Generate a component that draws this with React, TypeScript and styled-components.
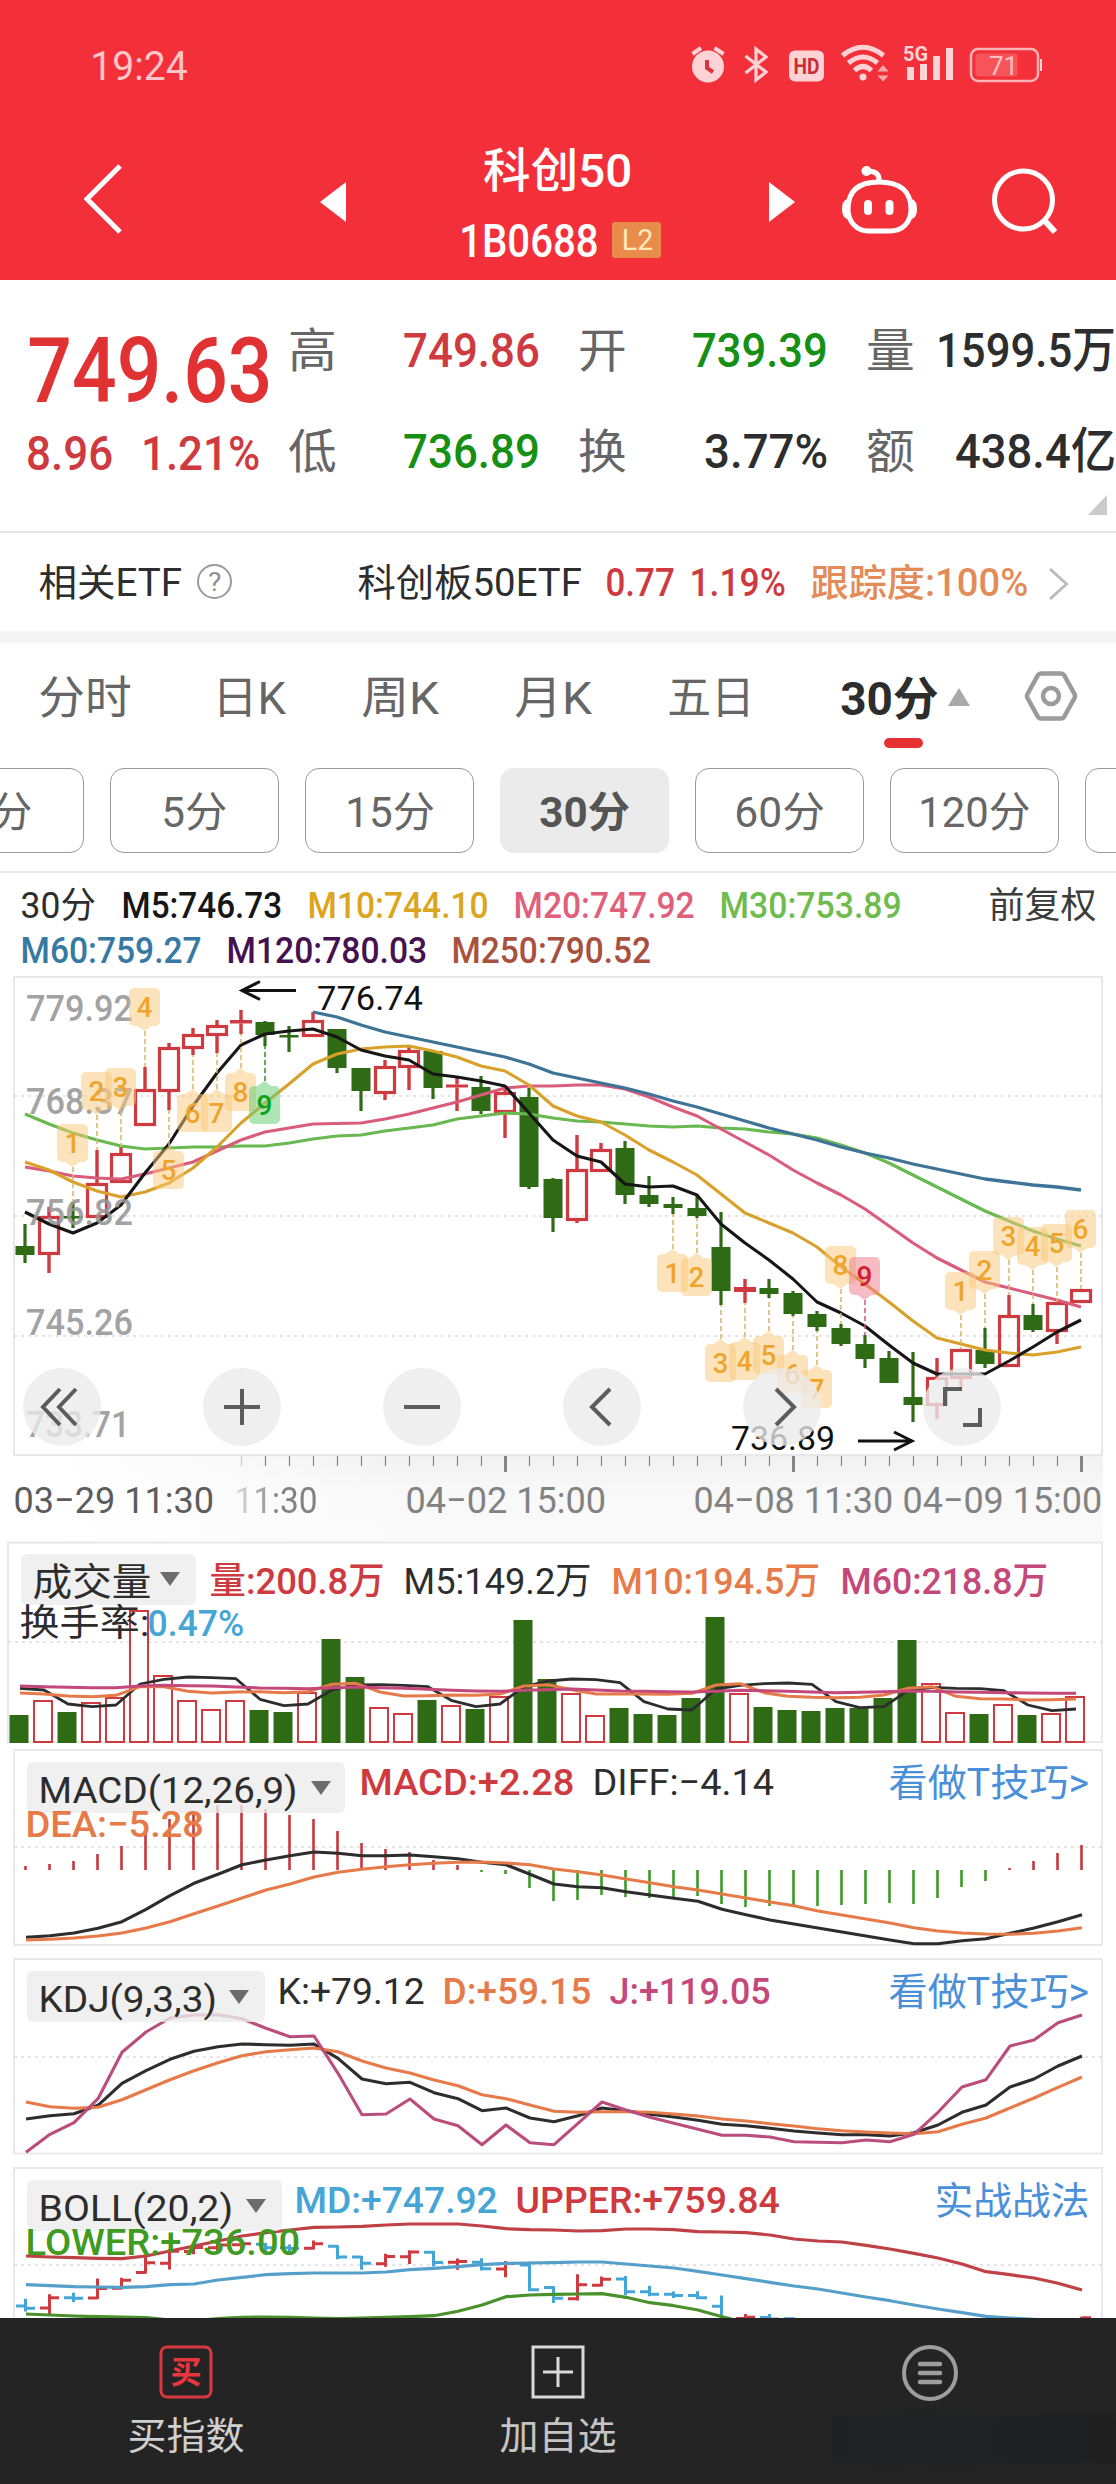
import React, { useLayoutEffect, useRef, useState } from "react";
import styled, { createGlobalStyle } from "styled-components";

const FONT = `Roboto, "Noto Sans CJK SC", sans-serif`;
const RED = "#cf3a40";
const GREEN = "#2f6a14";
const INK = "#2d2d2d";
const ORANGE = "#e67a48";
const MAGENTA = "#c4487a";
const SKY = "#45a5d5";

const Global = createGlobalStyle`
  body { margin: 0; background: #fff; font-family: ${FONT}; }
  * { box-sizing: border-box; }
  svg { display: block; }
  svg text { font-family: ${FONT}; }
`;

/* ---------- text fitted to a column width ---------- */

const FitBox = styled.span<{ $w: number; $s: number; $c: string; $b: number; $ml: number }>`
  display: inline-block;
  flex: none;
  width: ${(p) => p.$w}px;
  margin-left: ${(p) => p.$ml}px;
  font-size: ${(p) => p.$s}px;
  line-height: 1;
  color: ${(p) => p.$c};
  font-weight: ${(p) => p.$b};
  white-space: pre;
`;
const FitInner = styled.span`
  display: inline-block;
  transform-origin: 0 50%;
`;

type FitProps = { w: number; s: number; c?: string; b?: number; ml?: number; children: string };
function Fit({ w, s, c = INK, b = 400, ml = 0, children }: FitProps) {
  const ref = useRef<HTMLSpanElement>(null);
  const [k, setK] = useState(1);
  const pad = s * 0.04;
  useLayoutEffect(() => {
    if (ref.current) setK((w + pad * 2) / ref.current.offsetWidth);
  }, [w, pad, children]);
  return (
    <FitBox $w={w} $s={s} $c={c} $b={b} $ml={ml}>
      <FitInner ref={ref} style={{ transform: `translateX(${-pad}px) scaleX(${k})` }}>
        {children}
      </FitInner>
    </FitBox>
  );
}

/* ---------- page parts ---------- */

const Page = styled.main`
  width: 1116px;
  height: 2484px;
  overflow: hidden;
  display: flex;
  flex-direction: column;
  background: #fff;
`;
const Header = styled.header`
  height: 280px;
  flex: none;
  background: #f33039;
  color: #fff;
`;
const StatusBar = styled.div`
  height: 130px;
  padding: 40px 74px 0 92px;
  display: flex;
  justify-content: space-between;
`;
const Clock = styled.div`
  padding-top: 6px;
`;
const NavRow = styled.div`
  height: 150px;
  padding-left: 84px;
  display: flex;
`;
const NavIcon = styled.div<{ $ml?: number; $mt: number }>`
  margin-left: ${(p) => p.$ml ?? 0}px;
  margin-top: ${(p) => p.$mt}px;
  flex: none;
`;
const TitleBlock = styled.div`
  width: 423px;
  padding-top: 17px;
  display: flex;
  flex-direction: column;
  align-items: center;
  gap: 24px;
`;
const CodeLine = styled.div`
  display: flex;
  align-items: flex-start;
  padding-left: 6px;
`;
const LevelBadge = styled.div`
  width: 49px;
  height: 36px;
  margin: 4px 0 0 15px;
  padding: 3px 0 0 11px;
  border-radius: 3px;
  background: #e98c4b;
`;

const Quote = styled.section`
  position: relative;
  height: 253px;
  flex: none;
  display: flex;
  border-bottom: 2px solid #e4e4e4;
`;
const PriceCol = styled.div`
  width: 290px;
  padding: 46px 0 0 31px;
`;
const ChangeLine = styled.div`
  display: flex;
  margin: 12px 0 0 -3px;
`;
const Metrics = styled.div`
  display: grid;
  grid-template-columns: 248px 246px 246px;
  column-gap: 42px;
  grid-auto-rows: 101px;
  padding-top: 46px;
`;
const Metric = styled.div`
  display: flex;
  justify-content: space-between;
  align-items: baseline;
  height: 50px;
`;
const ExpandCorner = styled.i`
  position: absolute;
  right: 9px;
  bottom: 16px;
  border-left: 19px solid transparent;
  border-bottom: 20px solid #cbcbcb;
`;
const EtfRow = styled.section`
  height: 98px;
  flex: none;
  padding: 31px 0 0 40px;
  display: flex;
`;
const HelpMark = styled.div`
  width: 35px;
  height: 35px;
  margin: 0 0 0 16px;
  border: 2px solid #9a9a9a;
  border-radius: 50%;
  display: flex;
  justify-content: center;
  padding-top: 3px;
`;
const Band = styled.div`
  height: 12px;
  flex: none;
  background: #f4f4f4;
`;
const Tabs = styled.nav`
  height: 125px;
  flex: none;
  padding: 33px 0 0 40px;
  display: flex;
`;
const ActiveTab = styled.div`
  position: relative;
  display: flex;
  margin-left: 89px;
  width: 129px;
  &::after {
    content: "";
    position: absolute;
    left: 42px;
    top: 62px;
    width: 39px;
    height: 10px;
    border-radius: 5px;
    background: #e63133;
  }
`;
const UpArrow = styled.i`
  width: 0;
  height: 0;
  margin: 12px 0 0 11px;
  border: 11.5px solid transparent;
  border-top: 0;
  border-bottom: 18px solid #a9a9a9;
`;
const GearWrap = styled.div`
  margin: -6px 0 0 53px;
`;
const Pills = styled.div`
  height: 105px;
  flex: none;
  display: flex;
  gap: 26px;
  margin-left: -85px;
  border-bottom: 2px solid #e7e7e7;
`;
const Pill = styled.div<{ $on?: boolean }>`
  width: 169px;
  height: 85px;
  flex: none;
  border-radius: 14px;
  border: ${(p) => (p.$on ? "0" : "1.5px solid #999")};
  background: ${(p) => (p.$on ? "#ebebeb" : "#fff")};
  display: flex;
  align-items: center;
  justify-content: center;
  padding-top: 5px;
`;
const Averages = styled.div`
  height: 103px;
  flex: none;
  padding: 15px 0 0 22px;
`;
const AvgLine = styled.div`
  display: flex;
  height: 45px;
`;

const ChartBox = styled.section<{ $h: number }>`
  position: relative;
  height: ${(p) => p.$h}px;
  flex: none;
  overflow: hidden;
`;
const Plot = styled.svg`
  position: absolute;
  left: 0;
  top: 0;
  width: 1116px;
  height: 100%;
`;
const Controls = styled.div`
  position: absolute;
  left: 23px;
  bottom: 10px;
  display: flex;
  gap: 102px;
`;
const Round = styled.button`
  width: 78px;
  height: 78px;
  padding: 0;
  border: 0;
  border-radius: 50%;
  background: rgba(234, 234, 234, 0.78);
  display: flex;
  align-items: center;
  justify-content: center;
`;
const Axis = styled.div`
  height: 85px;
  flex: none;
  width: 1103px;
  background: linear-gradient(90deg, #fff 60px, rgba(255, 255, 255, 0) 420px), linear-gradient(#f1f1f1, #f8f8f8 35px, #fafafa);
`;
const AxisDates = styled.div`
  display: flex;
  padding: 8px 0 0 15px;
`;
const Fading = styled.div`
  display: flex;
  margin-left: 23px;
  -webkit-mask-image: linear-gradient(90deg, rgba(0, 0, 0, 0.25), #000 55%);
  mask-image: linear-gradient(90deg, rgba(0, 0, 0, 0.25), #000 55%);
`;
const Legend = styled.div<{ $x: number; $top: number }>`
  position: relative;
  display: flex;
  padding: ${(p) => p.$top}px 28px 0 ${(p) => p.$x}px;
`;
const Chip = styled.div<{ $w: number; $pt: number; $pl: number }>`
  flex: none;
  width: ${(p) => p.$w}px;
  height: 51px;
  border-radius: 6px;
  background: rgba(236, 236, 236, 0.8);
  display: flex;
  padding: ${(p) => p.$pt}px 0 0 ${(p) => p.$pl}px;
`;
const DownArrow = styled.i<{ $ml: number }>`
  width: 0;
  height: 0;
  margin: 9px 0 0 ${(p) => p.$ml}px;
  border: 10px solid transparent;
  border-bottom: 0;
  border-top: 14px solid #6c6c6c;
`;
const Values = styled.div<{ $mt: number }>`
  flex: 1;
  display: flex;
  margin-top: ${(p) => p.$mt}px;
`;
const Push = styled.span`
  margin-left: auto;
  display: flex;
`;
const LegendTail = styled.div<{ $x: number; $mt: number }>`
  position: relative;
  display: flex;
  padding-left: ${(p) => p.$x}px;
  margin-top: ${(p) => p.$mt}px;
`;

const BottomBar = styled.nav`
  height: 166px;
  flex: none;
  background: #242424;
  display: grid;
  grid-template-columns: repeat(3, 372px);
`;
const BarItem = styled.div`
  display: flex;
  flex-direction: column;
  align-items: center;
  padding-top: 27px;
  gap: 18px;
`;
const Smudge = styled.div`
  width: 286px;
  height: 50px;
  margin-top: -5px;
  margin-left: 86px;
  background: linear-gradient(90deg, #202122, #212425 30%, #1f2123 70%, #1f1f1f);
  filter: blur(2px);
`;

/* ---------- data ---------- */

const X0 = 25;
const STEP = 24;
const cx = (i: number) => X0 + STEP * i;

// [up, body top, body bottom, wick top, wick bottom]
type Candle = [number, number, number, number, number];
const candles: Candle[] = [
  [0, 1246, 1255, 1224, 1263], [1, 1216, 1254, 1207, 1273], [0, 1216, 1218.5, 1202, 1228], [1, 1183, 1217, 1150, 1217],
  [1, 1153, 1182, 1147, 1183], [1, 1089, 1125, 1067, 1125], [1, 1047, 1091, 1043, 1110], [1, 1034, 1048, 1028, 1055],
  [1, 1025, 1035, 1020, 1053], [1, 1020, 1023.5, 1010, 1034], [0, 1022, 1035, 1021, 1046], [0, 1035, 1037.5, 1026, 1052],
  [1, 1020, 1036, 1012, 1037], [0, 1029, 1068, 1029, 1073], [0, 1068, 1091, 1068, 1111], [1, 1066, 1093, 1060, 1100],
  [1, 1050, 1067, 1047, 1090], [0, 1051, 1088, 1050, 1099], [1, 1084.5, 1087.5, 1077, 1111], [0, 1087, 1111, 1076, 1114],
  [1, 1092, 1112, 1086, 1138], [0, 1097, 1187, 1088, 1189], [0, 1179, 1218, 1178, 1232], [1, 1169, 1220, 1135, 1223],
  [1, 1149, 1171, 1143, 1172], [0, 1148, 1195, 1141, 1204], [0, 1195, 1204, 1176, 1207], [0, 1204, 1208, 1197, 1214],
  [0, 1208, 1216, 1196, 1218], [0, 1247, 1291, 1212, 1305], [1, 1287, 1292, 1279, 1303], [0, 1288, 1294, 1279, 1298],
  [0, 1293, 1314, 1291, 1316], [0, 1314, 1327, 1311, 1331], [0, 1328, 1344, 1324, 1346], [0, 1344, 1359, 1335, 1368],
  [0, 1358, 1383, 1351, 1383], [0, 1397, 1405, 1352, 1422], [1, 1377, 1405, 1358, 1419], [1, 1349, 1378, 1349, 1387],
  [0, 1350, 1364, 1328, 1368], [1, 1315, 1366, 1295, 1366], [0, 1315, 1330, 1304, 1332], [1, 1302, 1331, 1302, 1344],
  [1, 1289, 1302, 1289, 1303],
];

const ma5 = [1212, 1224, 1233, 1223, 1205, 1173, 1144, 1106, 1073, 1045, 1034, 1031, 1029, 1037, 1050, 1056, 1060, 1074, 1077, 1081, 1086, 1113, 1140, 1156, 1162, 1184, 1187, 1186, 1195, 1224, 1243, 1260, 1279, 1302, 1313, 1326, 1345, 1363, 1374, 1374, 1374, 1361, 1347, 1332, 1320];
const ma10 = [1162, 1170, 1182, 1191, 1197, 1192, 1183, 1168, 1147, 1123, 1103, 1084, 1064, 1054, 1049, 1047, 1046, 1051, 1057, 1066, 1071, 1085, 1106, 1116, 1122, 1135, 1150, 1162, 1175, 1194, 1213, 1223, 1233, 1247, 1267, 1284, 1302, 1321, 1338, 1344, 1350, 1353, 1355, 1352, 1347];
const ma20 = [1167, 1171, 1176, 1178, 1179, 1174, 1168, 1162, 1151, 1140, 1132, 1128, 1124, 1123.5, 1123, 1119, 1114, 1108, 1102, 1095, 1088, 1086, 1086, 1085, 1085, 1089, 1097, 1107, 1116, 1129, 1142, 1155, 1170, 1183, 1195, 1209, 1226, 1243, 1258, 1270, 1282, 1288, 1294, 1300, 1307];
const ma30 = [1114, 1124, 1133, 1140, 1146, 1149, 1148, 1147, 1147, 1146, 1146, 1143, 1139, 1136, 1135, 1131, 1128, 1125, 1119, 1116, 1113, 1114, 1118, 1121, 1122, 1124, 1126, 1127, 1126, 1128, 1129, 1132, 1134, 1138, 1145, 1153, 1163, 1175, 1187, 1199, 1211, 1221, 1231, 1239, 1246];
const ma60 = [1012, 1017, 1025, 1032, 1037, 1042, 1047, 1052, 1057, 1064, 1073, 1078, 1083, 1088, 1094, 1101, 1107, 1114, 1121, 1128, 1134, 1140, 1147, 1153, 1158, 1164, 1169, 1174, 1179, 1182, 1185, 1187, 1190];

// [candle index, label, box top, tip direction, colour, leader end]
type Mark = [number, string, number, 1 | -1, "y" | "g" | "r", number];
const marks: Mark[] = [
  [2, "1", 1124, 1, "y", 1202], [3, "2", 1072, 1, "y", 1150], [4, "3", 1068, 1, "y", 1147], [5, "4", 988, 1, "y", 1067],
  [6, "5", 1151, -1, "y", 1110], [7, "6", 1094, -1, "y", 1055], [8, "7", 1094, -1, "y", 1053], [9, "8", 1073, -1, "y", 1034],
  [10, "9", 1086, -1, "g", 1046], [27, "1", 1254, -1, "y", 1214], [28, "2", 1258, -1, "y", 1218], [29, "3", 1344, -1, "y", 1305],
  [30, "4", 1342, -1, "y", 1303], [31, "5", 1336, -1, "y", 1298], [32, "6", 1355, -1, "y", 1316], [33, "7", 1370, -1, "y", 1331],
  [34, "8", 1246, 1, "y", 1324], [35, "9", 1257, 1, "r", 1335], [39, "1", 1272, 1, "y", 1349], [40, "2", 1251, 1, "y", 1328],
  [41, "3", 1217, 1, "y", 1295], [42, "4", 1227, 1, "y", 1304], [43, "5", 1224, 1, "y", 1302], [44, "6", 1210, 1, "y", 1289],
];
const markTone = {
  y: { fill: "rgba(252,200,120,.5)", text: "#efa52c", line: "#d9b566" },
  g: { fill: "rgba(110,205,120,.55)", text: "#0aa11c", line: "#2f8a3a" },
  r: { fill: "rgba(240,120,135,.5)", text: "#d3202c", line: "#cf5480" },
};

const volRed = new Set([1, 3, 4, 5, 6, 7, 8, 9, 12, 15, 16, 18, 20, 23, 24, 30, 38, 39, 41, 43, 44]);
const volTop = [1715, 1700, 1712, 1702, 1697, 1610, 1675, 1700, 1709, 1700, 1710, 1712, 1692, 1639, 1677, 1707, 1713, 1700, 1705, 1709, 1696, 1620, 1679, 1693, 1715, 1708, 1714, 1715, 1698, 1617, 1693, 1707, 1710, 1711, 1708, 1708, 1698, 1640, 1683, 1712, 1714, 1704, 1715, 1713, 1696];
const vol5 = [475, 480, 522, 530, 525, 462, 448, 441, 443, 446, 508, 527, 522, 480, 465, 464, 466, 470, 512, 530, 522, 470, 453, 447, 449, 458, 515, 537, 540, 477, 466, 461, 459, 463, 515, 533, 530, 482, 472, 475, 476, 482, 525, 542, 537];
const vol10 = [489, 492, 498, 500, 496, 470, 470, 484, 489, 486, 485, 488, 485, 463, 460, 486, 498, 497, 495, 496, 492, 468, 464, 479, 492, 492, 492, 493, 490, 465, 461, 488, 499, 502, 503, 502, 495, 475, 470, 499, 506, 507, 510, 509, 507];
const vol60 = [468, 470, 472, 473, 473, 468, 466, 467, 468, 471, 474, 475, 476, 473, 471, 473, 475, 478, 481, 483, 484, 481, 479, 477, 480, 483, 484, 485, 486, 484, 481, 482, 484, 486, 488, 487, 485, 483, 484, 486, 487, 488, 489, 490, 490];

const macd = [1866, 1864, 1861, 1854, 1846, 1832, 1819, 1812, 1805, 1805, 1809, 1815, 1819, 1831, 1843, 1849, 1852, 1860, 1865, 1872, 1874, 1888, 1901, 1900, 1895, 1897, 1898, 1897, 1896, 1904, 1907, 1906, 1905, 1906, 1905, 1904, 1903, 1904, 1898, 1887, 1881, 1868, 1861, 1853, 1845];
const diff = [592, 587, 579, 565, 545, 508, 467, 430, 403, 374, 360, 347, 336, 340, 347, 347, 345, 350, 356, 367, 374, 403, 432, 440, 443, 455, 465, 475, 484, 508, 524, 540, 552, 564, 576, 588, 600, 611, 611, 602, 596, 580, 564, 545, 524];
const dea = [600, 598, 594, 588, 579, 564, 545, 521, 498, 474, 450, 432, 411, 397, 388, 380, 374, 370, 367, 366, 369, 374, 387, 395, 405, 417, 428, 440, 450, 462, 474, 486, 497, 513, 525, 537, 549, 563, 573, 579, 582, 583, 580, 573, 563];

const kLine = [507, 497, 491, 466, 400, 362, 328, 304, 290, 282, 284, 286, 282, 325, 387, 401, 397, 428, 446, 482, 474, 504, 515, 497, 474, 482, 493, 501, 511, 523, 527, 535, 543, 549, 554, 554, 558, 548, 525, 487, 465, 411, 387, 348, 318];
const dLine = [456, 470, 475, 472, 449, 419, 389, 362, 338, 317, 305, 299, 294, 305, 333, 354, 369, 390, 407, 434, 446, 465, 484, 487, 485, 485, 487, 492, 498, 507, 513, 521, 528, 536, 542, 546, 549, 551, 545, 523, 504, 474, 444, 412, 381];
const jLine = [607, 553, 518, 446, 307, 246, 204, 195, 194, 206, 235, 260, 258, 370, 494, 492, 447, 507, 527, 584, 525, 578, 584, 520, 456, 480, 502, 520, 538, 556, 556, 561, 575, 577, 578, 570, 575, 553, 487, 411, 389, 288, 270, 218, 195];

const upper = [318, 321, 323, 325, 326, 318, 303, 288, 273, 258, 248, 240, 232, 231, 229, 225, 222, 222, 222, 228, 236, 239, 240, 243, 242, 237, 237, 239, 245, 246, 248, 255, 267, 273, 276, 286, 297, 310, 324, 342, 365, 374, 384, 400, 420];
const mid = [404, 407, 410, 411, 412, 410, 404, 402, 390, 382, 374, 371, 369, 369, 369, 366, 359, 355, 350, 344, 340, 339, 338, 336, 336, 342, 348, 354, 364, 375, 386, 397, 408, 417, 429, 441, 452, 465, 477, 488, 499, 504, 508, 512, 516];
const lower = [492, 495, 498, 500, 501, 503, 510, 512, 506, 502, 501, 502, 504, 506, 504, 502, 500, 497, 484, 465, 440, 435, 433, 432, 431, 442, 458, 467, 480, 500, 520];

/* ---------- drawing helpers ---------- */

function Curve({ ys, color, x0 = X0, from = 0, base, w = 3.1 }: { ys: number[]; color: string; x0?: number; from?: number; base?: number; w?: number }) {
  const pts = ys.map((y, i) => `${x0 + STEP * (i + from)},${base === undefined ? y : (base + y / 3).toFixed(1)}`).join(" ");
  return <polyline points={pts} fill="none" stroke={color} strokeWidth={w} strokeLinejoin="round" />;
}
const Dotted = ({ y, x = 14 }: { y: number; x?: number }) => (
  <line x1={x} x2="1102" y1={y} y2={y} stroke="#dcdcdc" strokeWidth="1.5" strokeDasharray="3 4" />
);
const Frame = ({ x = 14, y, h }: { x?: number; y: number; h: number }) => (
  <rect x={x} y={y} width={1102 - x} height={h} fill="none" stroke="#e8e8e8" strokeWidth="2" />
);

function MainChart() {
  return (
    <ChartBox $h={480}>
      <Plot viewBox="0 976 1116 480">
        <Frame y={977} h={478} />
        {[1096, 1216, 1336].map((y) => <Dotted key={y} y={y} />)}
        {candles.map(([up, t, b, wt, wb], i) =>
          up ? (
            <g key={i} stroke={RED} fill="none">
              <path d={`M${cx(i)} ${wt}V${t}M${cx(i)} ${b}V${wb}`} strokeWidth="3.4" />
              {b - t < 6 ? <rect x={cx(i) - 11} y={t} width="22" height={b - t} fill={RED} stroke="none" /> : <rect x={cx(i) - 9.5} y={t + 1.5} width="19" height={b - t - 2} strokeWidth="3.2" />}
            </g>
          ) : (
            <g key={i}>
              <line x1={cx(i)} x2={cx(i)} y1={wt} y2={wb} stroke={GREEN} strokeWidth="3.2" />
              <rect x={cx(i) - 9.5} y={t} width="19" height={b - t} fill={GREEN} />
            </g>
          )
        )}
        <Curve ys={ma30} color="#6ab850" />
        <Curve ys={ma20} color="#d95c7c" />
        <Curve ys={ma10} color="#d9a12a" />
        <Curve ys={ma5} color="#161616" />
        <Curve ys={ma60} color="#3c7396" from={12} w={3.3} />
        {([["779.92", 1021], ["768.37", 1114], ["756.82", 1225], ["745.26", 1335], ["733.71", 1437]] as [string, number][]).map(([t, y]) => (
          <text key={t} x="26" y={y} fontSize="37" fontWeight="500" fill="#969696" fillOpacity=".9" textLength={t === "733.71" ? 104 : 107} lengthAdjust="spacingAndGlyphs">{t}</text>
        ))}
        {marks.map(([i, t, top, dir, tone, end], n) => {
          const x = cx(i) - 0.5;
          const m = markTone[tone];
          const bottom = top + 38;
          const tip = dir > 0 ? bottom + 5 : top - 5;
          const edge = dir > 0 ? bottom : top;
          return (
            <g key={n}>
              <line x1={x + 0.5} x2={x + 0.5} y1={tip} y2={end} stroke={m.line} strokeWidth="1.5" strokeDasharray="5 3" />
              <rect x={x - 15.5} y={top} width="31" height="38" rx="5" fill={m.fill} />
              <path d={`M${x - 7} ${edge}L${x} ${tip}L${x + 7} ${edge}Z`} fill={m.fill} />
              <text x={x} y={top + 29} textAnchor="middle" fontSize="28" fontWeight="500" fill={m.text}>{t}</text>
            </g>
          );
        })}
        <path d="M296 990.5H242M260 981.5L242 990.5L260 999.5" fill="none" stroke="#111" strokeWidth="3" />
        <text x="317" y="1010" fontSize="32.5" fill="#111" textLength="106" lengthAdjust="spacingAndGlyphs">776.74</text>
        <path d="M858 1441H912M894 1432L912 1441L894 1450" fill="none" stroke="#111" strokeWidth="3" />
        <text x="731" y="1450" fontSize="32.5" fill="#111" textLength="104" lengthAdjust="spacingAndGlyphs">736.89</text>
      </Plot>
      <Controls>
        {["M37 20L20 38L37 56M53 20L36 38L53 56", "M39 20V56M21 38H57", "M21 38H57", "M47 20L29 38L47 56", "M33 20L51 38L33 56", "M39 20H22V37M40 56H57V39"].map((d) => (
          <Round key={d}>
            <svg width="78" height="78" viewBox="0 -1 78 78"><path d={d} fill="none" stroke="#5c5c5c" strokeWidth="4" /></svg>
          </Round>
        ))}
      </Controls>
    </ChartBox>
  );
}

function TimeAxis() {
  return (
    <Axis>
      <svg width="1103" height="18" viewBox="0 0 1103 18">
        {Array.from({ length: 36 }, (_, n) => {
          const i = n + 9;
          const big = i === 20 || i === 32 || i === 44;
          return <line key={i} x1={cx(i) + 0.5} x2={cx(i) + 0.5} y1="0" y2={big ? 16 : 10} stroke={n ? "#858585" : "#ccc"} strokeWidth={big ? 3 : 1.2} />;
        })}
      </svg>
      <AxisDates>
        <Fit w={198} s={37} c="#5c5c5c">03−29 11:30</Fit>
        <Fading><Fit w={80} s={37} c="#828282">11:30</Fit></Fading>
        <Fit w={198} s={37} c="#828282" ml={91}>04−02 15:00</Fit>
        <Fit w={197} s={37} c="#828282" ml={90}>04−08 11:30</Fit>
        <Fit w={197} s={37} c="#828282" ml={12}>04−09 15:00</Fit>
      </AxisDates>
    </Axis>
  );
}

function Volume() {
  return (
    <ChartBox $h={208}>
      <Plot viewBox="0 1541 1116 208">
        <Frame x={8} y={1542.5} h={199.5} />
        <Dotted y={1642} x={8} />
        {volTop.map((t, i) => {
          const x = 19 + STEP * i;
          return volRed.has(i) ? (
            <rect key={i} x={x - 9} y={t + 1} width="18" height={1741 - t} fill="#fff" stroke={RED} strokeWidth="2" />
          ) : (
            <rect key={i} x={x - 9.5} y={t} width="19" height={1743 - t} fill={GREEN} />
          );
        })}
        <Curve ys={vol5} color={INK} x0={20} base={1530} w={2.8} />
        <Curve ys={vol10} color={ORANGE} x0={20} base={1530} w={3} />
        <Curve ys={vol60} color={MAGENTA} x0={20} base={1530} w={3} />
      </Plot>
      <Legend $x={21} $top={13}>
        <Chip $w={175} $pt={9} $pl={13}>
          <Fit w={116} s={38}>成交量</Fit>
          <DownArrow $ml={10} />
        </Chip>
        <Values $mt={9}>
          <Fit w={172} s={37} c={RED} b={500} ml={15}>量:200.8万</Fit>
          <Fit w={185} s={37} ml={22}>M5:149.2万</Fit>
          <Fit w={206} s={37} c={ORANGE} b={500} ml={23}>M10:194.5万</Fit>
          <Fit w={205} s={37} c={MAGENTA} b={500} ml={23}>M60:218.8万</Fit>
        </Values>
      </Legend>
      <LegendTail $x={21} $mt={0}>
        <Fit w={127} s={37}>换手率:</Fit>
        <Fit w={94} s={37} c={SKY} b={500} ml={1}>0.47%</Fit>
      </LegendTail>
    </ChartBox>
  );
}

function Macd() {
  return (
    <ChartBox $h={208}>
      <Plot viewBox="0 1749 1116 208">
        <Frame y={1750} h={195} />
        <Dotted y={1847} />
        {macd.map((y, i) => (
          <line key={i} x1={cx(i) + 0.5} x2={cx(i) + 0.5} y1={1870} y2={y} stroke={y < 1870 ? "#c4393f" : "#3a9b25"} strokeWidth="2.6" />
        ))}
        <Curve ys={diff} color={INK} x0={26} base={1740} />
        <Curve ys={dea} color={ORANGE} x0={26} base={1740} />
      </Plot>
      <Legend $x={27} $top={13}>
        <Chip $w={318} $pt={10} $pl={13}>
          <Fit w={256} s={37}>MACD(12,26,9)</Fit>
          <DownArrow $ml={15} />
        </Chip>
        <Values $mt={2}>
          <Fit w={212} s={37} c={RED} b={500} ml={16}>MACD:+2.28</Fit>
          <Fit w={179} s={37} ml={21}>DIFF:−4.14</Fit>
          <Push><Fit w={198} s={38} c="#4a90d9">{"看做T技巧>"}</Fit></Push>
        </Values>
      </Legend>
      <LegendTail $x={27} $mt={-7}>
        <Fit w={176} s={37} c={ORANGE} b={500}>DEA:−5.28</Fit>
      </LegendTail>
    </ChartBox>
  );
}

function Kdj() {
  return (
    <ChartBox $h={209}>
      <Plot viewBox="0 1957 1116 209">
        <Frame y={1959} h={194.5} />
        <Dotted y={2057} />
        <Curve ys={kLine} color={INK} x0={26} base={1950} />
        <Curve ys={dLine} color={ORANGE} x0={26} base={1950} />
        <Curve ys={jLine} color="#bb4d7c" x0={26} base={1950} />
      </Plot>
      <Legend $x={27} $top={14}>
        <Chip $w={238} $pt={10} $pl={13}>
          <Fit w={175} s={37}>KDJ(9,3,3)</Fit>
          <DownArrow $ml={14} />
        </Chip>
        <Values $mt={2}>
          <Fit w={144} s={37} ml={14}>K:+79.12</Fit>
          <Fit w={146} s={37} c={ORANGE} b={500} ml={21}>D:+59.15</Fit>
          <Fit w={158} s={37} c={MAGENTA} b={500} ml={21}>J:+119.05</Fit>
          <Push><Fit w={198} s={38} c="#4a90d9">{"看做T技巧>"}</Fit></Push>
        </Values>
      </Legend>
    </ChartBox>
  );
}

function Boll() {
  const my = (y: number) => 2244 + (y - 1021) * 0.275;
  return (
    <ChartBox $h={152}>
      <Plot viewBox="0 2166 1116 152">
        <Frame y={2168} h={200} />
        <Dotted y={2265} />
        {candles.map(([up, t, b, wt, wb], i) => {
          const o = my(up ? b : t);
          const c = my(up ? t : b);
          return (
            <path
              key={i}
              d={`M${cx(i) - 9} ${o}H${cx(i) + 0.5}M${cx(i) + 0.5} ${c}H${cx(i) + 10}M${cx(i) + 0.5} ${my(wt) - 1}V${my(wb) + 1}`}
              fill="none"
              stroke={up ? RED : SKY}
              strokeWidth="3"
            />
          );
        })}
        <Curve ys={upper} color="#bf4045" x0={26} base={2150} w={3.2} />
        <Curve ys={mid} color="#55a0cb" x0={26} base={2150} w={3.2} />
        <Curve ys={lower} color="#4a912c" x0={26} base={2150} w={3.2} />
      </Plot>
      <Legend $x={27} $top={14}>
        <Chip $w={255} $pt={10} $pl={13}>
          <Fit w={192} s={37}>BOLL(20,2)</Fit>
          <DownArrow $ml={14} />
        </Chip>
        <Values $mt={2}>
          <Fit w={200} s={37} c={SKY} b={500} ml={14}>MD:+747.92</Fit>
          <Fit w={261} s={37} c={RED} b={500} ml={21}>UPPER:+759.84</Fit>
          <Push><Fit w={152} s={38} c="#4a90d9">实战战法</Fit></Push>
        </Values>
      </Legend>
      <LegendTail $x={27} $mt={-7}>
        <Fit w={272} s={37} c="#3f9b22" b={500}>LOWER:+736.00</Fit>
      </LegendTail>
    </ChartBox>
  );
}

function StatusIcons() {
  const P = "#ffd3d5";
  return (
    <svg width="360" height="50" viewBox="682 40 360 50">
      <g fill={P}>
        <circle cx="708" cy="66.500" r="16" />
        <path d="M692.500 54L701 48M714.500 48L723.500 54" stroke={P} strokeWidth="4" />
        <path d="M707 60V68L713 72" fill="none" stroke="#d8343c" strokeWidth="4" />
        <path d="M745.500 56L766 72L756 80V49L766 57L745.500 73" fill="none" stroke={P} strokeWidth="3.200" />
        <rect x="789" y="50.500" width="35" height="31" rx="6" />
        <text x="806.500" y="74" fontSize="22" fontWeight="700" fill="#c92e36" textAnchor="middle" textLength="26" lengthAdjust="spacingAndGlyphs">HD</text>
        <g fill="none" stroke={P} strokeWidth="5">
          <path d="M842.500 55.500Q863 39 883.500 55.500" />
          <path d="M848.500 63Q863 51 877.500 63" />
          <path d="M854.500 70.500Q863 62.500 871.500 70.500" />
        </g>
        <circle cx="863" cy="77" r="3.500" />
        <path d="M877.500 71.500L883 65L888.500 71.500ZM877.500 75.500L883 81.500L888.500 75.500Z" opacity=".75" />
        <text x="903" y="61" fontSize="21" fontWeight="700" textLength="25" lengthAdjust="spacingAndGlyphs">5G</text>
        <path d="M907 67h7v13h-7ZM920 64h7v16h-7ZM933 56h7v24h-7ZM946 48h7v32h-7Z" />
        <rect x="971" y="49" width="67" height="32" rx="7" fill="none" stroke="#ffb3b6" strokeWidth="2.500" />
        <rect x="975.500" y="53.500" width="42" height="23" rx="3" fill="rgba(255,150,155,.35)" />
        <path d="M1040 59h2.500v12h-2.500Z" />
        <text x="1003.500" y="74.500" fontSize="26" fill="#ffc0c3" textAnchor="middle">71</text>
      </g>
    </svg>
  );
}

const pills = [
  { t: "1分", w: 62 }, { t: "5分", w: 63 }, { t: "15分", w: 86 }, { t: "30分", w: 87, on: true },
  { t: "60分", w: 87 }, { t: "120分", w: 109 }, { t: "", w: 0 },
];
const metrics: [string, string, number, string][] = [
  ["高", "749.86", 133, RED], ["开", "739.39", 132, "#159015"], ["量", "1599.5万", 176, INK],
  ["低", "736.89", 133, "#159015"], ["换", "3.77%", 120, INK], ["额", "438.4亿", 157, INK],
];

export default function App() {
  return (
    <Page>
      <Global />
      <Header>
        <StatusBar>
          <Clock><Fit w={94} s={41} c="#ffc6c9">19:24</Fit></Clock>
          <StatusIcons />
        </StatusBar>
        <NavRow>
          <NavIcon $mt={34}>
            <svg width="38" height="70" viewBox="0 0 38 70"><path d="M36 2L3 35L36 68" fill="none" stroke="#fff" strokeWidth="5" /></svg>
          </NavIcon>
          <NavIcon $ml={198} $mt={52}>
            <svg width="26" height="40"><path d="M26 0V40L0 20Z" fill="#fff" /></svg>
          </NavIcon>
          <TitleBlock>
            <Fit w={145} s={47} c="#fff" b={500}>科创50</Fit>
            <CodeLine>
              <Fit w={136} s={46} c="#fff" b={500}>1B0688</Fit>
              <LevelBadge><Fit w={29} s={30} c="#ffe9bd">L2</Fit></LevelBadge>
            </CodeLine>
          </TitleBlock>
          <NavIcon $mt={52}>
            <svg width="26" height="40"><path d="M0 0V40L26 20Z" fill="#fff" /></svg>
          </NavIcon>
          <NavIcon $ml={46} $mt={34}>
            <svg width="78" height="72" viewBox="841 164 78 72" fill="none" stroke="#fff" strokeWidth="5">
              <path d="M879 182C857 182 848 192 848 209C848 223 858 231 868 231H890C902 231 911 223 911 209C911 192 901 182 879 182Z" />
              <path d="M879 182V179Q879 172 869 171" />
              <circle cx="866.500" cy="171" r="5" fill="#fff" stroke="none" />
              <path d="M847 199Q842 201 842 209Q842 217 847 219ZM912 199Q917 201 917 209Q917 217 912 219Z" fill="#fff" stroke="none" />
              <path d="M868 204V211M889.500 204V211" strokeWidth="8" strokeLinecap="round" />
            </svg>
          </NavIcon>
          <NavIcon $ml={73} $mt={38}>
            <svg width="66" height="66" viewBox="992 168 66 66" fill="none" stroke="#fff" strokeWidth="5">
              <circle cx="1023.500" cy="200" r="29" />
              <path d="M1045 221L1055 232" strokeWidth="6" />
            </svg>
          </NavIcon>
        </NavRow>
      </Header>

      <Quote>
        <PriceCol>
          <Fit w={238} s={91} c="#e03133" b={500}>749.63</Fit>
          <ChangeLine>
            <Fit w={83} s={49} c={RED} b={500}>8.96</Fit>
            <Fit w={115} s={49} c={RED} b={500} ml={32}>1.21%</Fit>
          </ChangeLine>
        </PriceCol>
        <Metrics>
          {metrics.map(([l, v, w, c]) => (
            <Metric key={l}>
              <Fit w={45} s={47} c="#666">{l}</Fit>
              <Fit w={w} s={49} c={c} b={500}>{v}</Fit>
            </Metric>
          ))}
        </Metrics>
        <ExpandCorner />
      </Quote>

      <EtfRow>
        <Fit w={141} s={38}>相关ETF</Fit>
        <HelpMark><Fit w={11} s={26} c="#8f8f8f">?</Fit></HelpMark>
        <Fit w={221} s={38} ml={127}>科创板50ETF</Fit>
        <Fit w={66} s={38} c={RED} b={500} ml={27}>0.77</Fit>
        <Fit w={93} s={38} c={RED} b={500} ml={18}>1.19%</Fit>
        <Fit w={215} s={38} c="#e38c58" b={500} ml={28}>跟踪度:100%</Fit>
        <NavIcon $ml={21} $mt={3}>
          <svg width="22" height="34" viewBox="0 0 22 34"><path d="M2 2L18.500 17L2 32" fill="none" stroke="#bcbcbc" strokeWidth="3" /></svg>
        </NavIcon>
      </EtfRow>
      <Band />

      <Tabs>
        <Fit w={90} s={45} c="#666">分时</Fit>
        <Fit w={70} s={45} c="#666" ml={84}>日K</Fit>
        <Fit w={74} s={45} c="#666" ml={79}>周K</Fit>
        <Fit w={74} s={45} c="#666" ml={79}>月K</Fit>
        <Fit w={84} s={45} c="#666" ml={79}>五日</Fit>
        <ActiveTab>
          <Fit w={95} s={46} b={700}>30分</Fit>
          <UpArrow />
        </ActiveTab>
        <GearWrap>
          <svg width="54" height="52" viewBox="0 0 54 52" fill="none" stroke="#9b9b9b" strokeWidth="4.500">
            <path d="M17 3.500H37Q39 3.500 40 5L50.500 24Q51.500 26 50.500 28L40 47Q39 48.500 37 48.500H17Q15 48.500 14 47L3.500 28Q2.500 26 3.500 24L14 5Q15 3.500 17 3.500Z" />
            <circle cx="27" cy="26" r="8" />
          </svg>
        </GearWrap>
      </Tabs>
      <Pills>
        {pills.map((p, i) => (
          <Pill key={i} $on={p.on}>
            {p.t ? <Fit w={p.w} s={42} c={p.on ? "#555" : "#666"} b={p.on ? 700 : 400}>{p.t}</Fit> : null}
          </Pill>
        ))}
      </Pills>

      <Averages>
        <AvgLine>
          <Fit w={72} s={36}>30分</Fit>
          <Fit w={158} s={36} c="#161616" b={500} ml={29}>M5:746.73</Fit>
          <Fit w={178} s={36} c="#dba520" b={500} ml={28}>M10:744.10</Fit>
          <Fit w={178} s={36} c="#e0607c" b={500} ml={28}>M20:747.92</Fit>
          <Fit w={179} s={36} c="#6fbb4e" b={500} ml={28}>M30:753.89</Fit>
          <Fit w={105} s={36} c="#3c3c3c" ml={90}>前复权</Fit>
        </AvgLine>
        <AvgLine>
          <Fit w={178} s={36} c="#3679a2" b={500}>M60:759.27</Fit>
          <Fit w={198} s={36} c="#45124f" b={500} ml={28}>M120:780.03</Fit>
          <Fit w={197} s={36} c="#a9513f" b={500} ml={27}>M250:790.52</Fit>
        </AvgLine>
      </Averages>

      <MainChart />
      <TimeAxis />
      <Volume />
      <Macd />
      <Kdj />
      <Boll />

      <BottomBar>
        <BarItem>
          <svg width="54" height="54" viewBox="0 0 54 54">
            <rect x="2" y="2" width="50" height="50" rx="6" fill="none" stroke="#d8383f" strokeWidth="3" />
            <text x="27" y="38" fontSize="31" fontWeight="700" fill="#e8363f" textAnchor="middle">买</text>
          </svg>
          <Fit w={114} s={38} c="#cfcfcf">买指数</Fit>
        </BarItem>
        <BarItem>
          <svg width="54" height="54" viewBox="0 0 54 54" fill="none" stroke="#dadada">
            <rect x="2" y="2" width="50" height="50" strokeWidth="3" />
            <path d="M27 12V42M12 27H42" strokeWidth="3" />
          </svg>
          <Fit w={114} s={38} c="#c4c4c4">加自选</Fit>
        </BarItem>
        <BarItem>
          <svg width="56" height="56" viewBox="0 0 56 56" fill="none" stroke="#9d9d9d">
            <circle cx="28" cy="28" r="26" strokeWidth="4" />
            <path d="M18 19H38M18 28H38M18 37H38" strokeWidth="4.500" strokeLinecap="round" />
          </svg>
          <Smudge />
        </BarItem>
      </BottomBar>
    </Page>
  );
}
